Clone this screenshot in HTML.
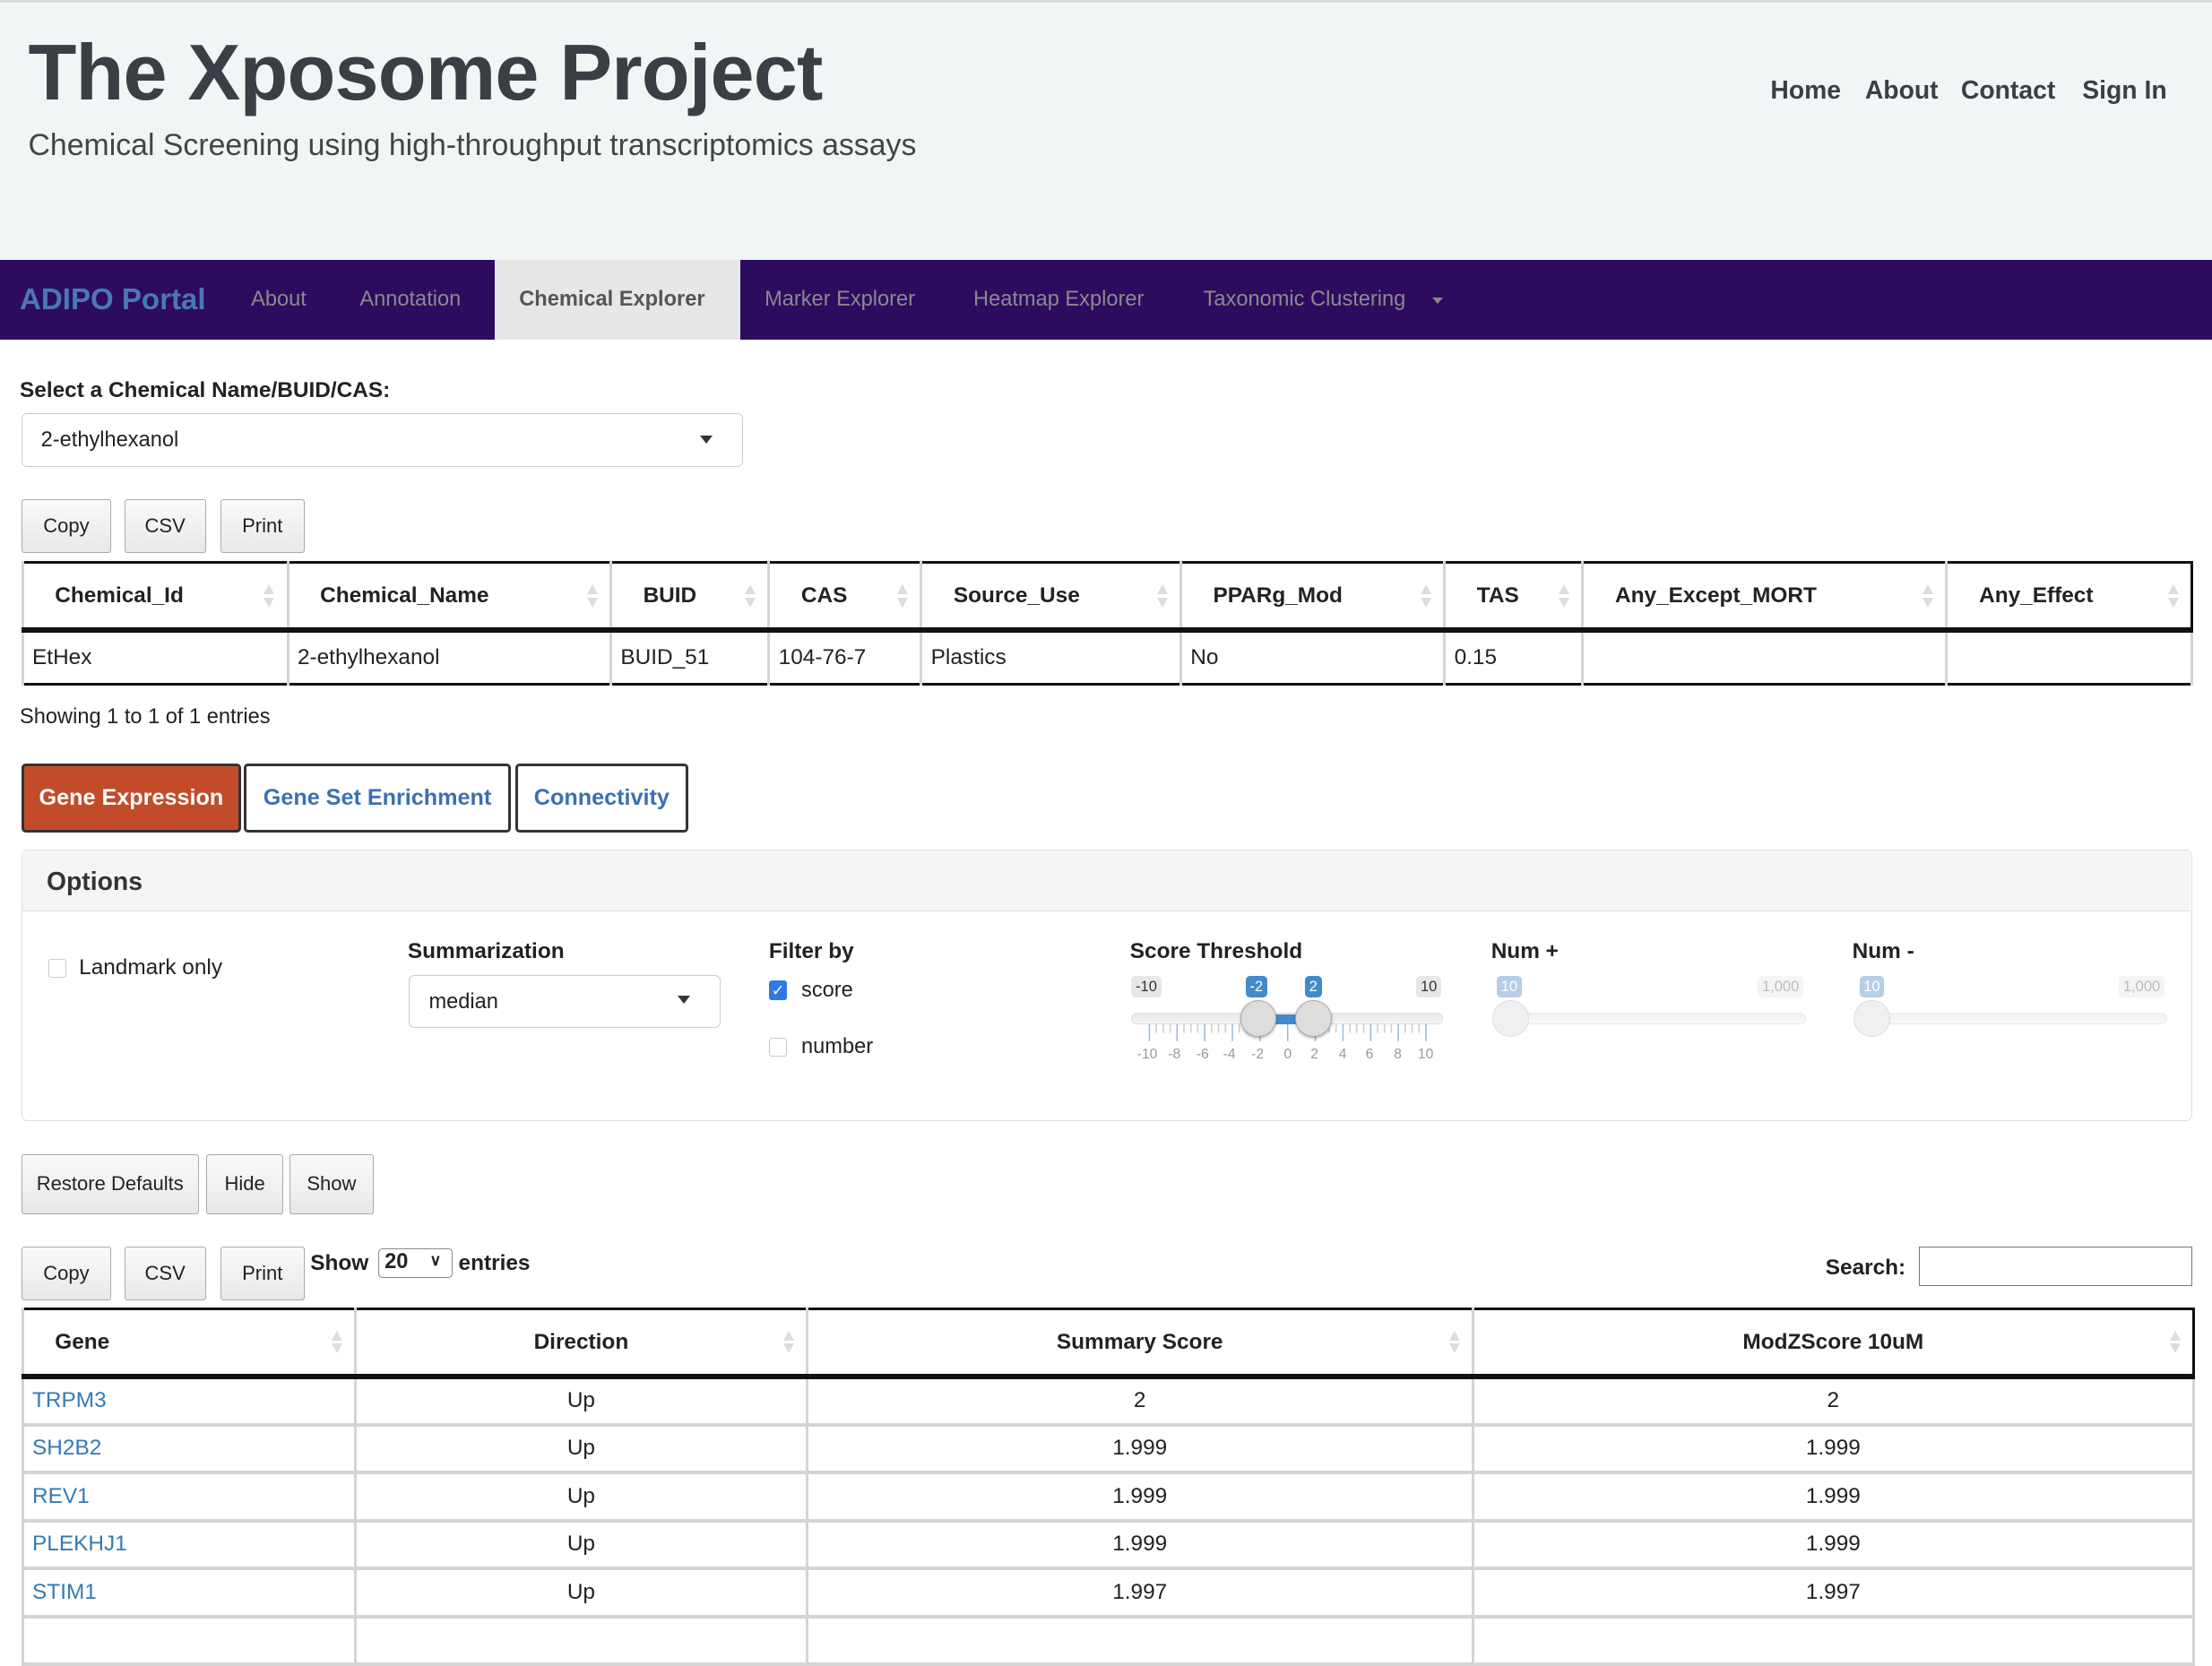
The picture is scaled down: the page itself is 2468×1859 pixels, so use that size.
<!DOCTYPE html>
<html><head><meta charset="utf-8">
<style>
html{zoom:1.574}
*{box-sizing:border-box}
body{margin:0;width:1568px;height:1153px;overflow:hidden;font-family:"Liberation Sans",Arial,sans-serif;font-size:15px;color:#222;background:#fff;position:relative}
.a{position:absolute}
.hdr{left:0;top:0;width:1568px;height:184px;background:#f2f5f6;border-top:2px solid #dcdcdc}
.title{left:20px;top:19px;font-size:56px;font-weight:bold;color:#3b3e44;letter-spacing:-0.5px}
.sub{left:20px;top:91px;font-size:21.5px;color:#444}
.tn{top:54px;font-size:18px;font-weight:bold;color:#3b3e44}
.nav{left:0;top:184px;width:1568px;height:57px;background:#2d0c5f}
.nl{top:204px;color:#8a8a8a;font-size:15px}
.btn{border:1px solid #aaa;border-radius:2px;background:linear-gradient(#fafafa,#e8e8e8);height:38px;display:flex;align-items:center;justify-content:center;font-size:14px;color:#222}
.sel{border:1px solid #ccc;border-radius:4px;background:#fff}
.caret{width:0;height:0;border-left:5px solid transparent;border-right:5px solid transparent;border-top:6px solid #333}
table{border-collapse:collapse;table-layout:fixed;position:absolute}
th{font-weight:bold;text-align:left;border-left:2px solid #d4d4d4;position:relative;padding:0 0 0 22px;font-size:15.5px;color:#222}
td{border-left:2px solid #d4d4d4;border-right:2px solid #d4d4d4;padding:0 6px;font-size:15.5px}
.si{position:absolute;right:8px;top:50%;margin-top:-8px;width:8px;height:16px}
.si:before{content:"";position:absolute;left:0;top:0;border-left:4px solid transparent;border-right:4px solid transparent;border-bottom:7px solid #ddd}
.si:after{content:"";position:absolute;left:0;top:9px;border-left:4px solid transparent;border-right:4px solid transparent;border-top:7px solid #ddd}
.lab{font-weight:bold;font-size:15.5px}
.cb{width:13px;height:13px;border:1px solid #ccc;border-radius:2px;background:#fff}
.tag{font-size:10.5px;border-radius:3px;padding:1px 3px;line-height:13px}
.track{height:8px;border-radius:4px;background:linear-gradient(#e8e8e8,#f6f6f6);border:1px solid #ddd}
.knob{width:26px;height:26px;border-radius:50%;background:#ddd;border:1px solid #aaa;box-shadow:0 1px 2px rgba(0,0,0,.3)}
.knob2{width:26px;height:26px;border-radius:50%;background:#f0f0f0;border:1px solid #ddd}
.t2 td{height:34px;border-bottom:3px solid #d4d4d4}
.lnk{color:#337ab7}
</style></head><body>
<div class="a hdr"></div>
<div class="a title">The Xposome Project</div>
<div class="a sub">Chemical Screening using high-throughput transcriptomics assays</div>
<div class="a tn" style="left:1255px">Home</div>
<div class="a tn" style="left:1322px">About</div>
<div class="a tn" style="left:1390px">Contact</div>
<div class="a tn" style="left:1476px">Sign In</div>

<div class="a nav"></div>
<div class="a" style="left:14px;top:201px;font-size:21px;font-weight:bold;color:#4a78b6">ADIPO Portal</div>
<div class="a nl" style="left:178px">About</div>
<div class="a nl" style="left:255px">Annotation</div>
<div class="a" style="left:351px;top:184px;width:174px;height:57px;background:#e7e7e7"></div>
<div class="a nl" style="left:368px;color:#555;font-weight:bold">Chemical Explorer</div>
<div class="a nl" style="left:542px">Marker Explorer</div>
<div class="a nl" style="left:690px">Heatmap Explorer</div>
<div class="a nl" style="left:853px">Taxonomic Clustering</div>
<div class="a caret" style="left:1015px;top:211px;border-top-color:#888;border-left-width:4px;border-right-width:4px;border-top-width:5px"></div>

<div class="a lab" style="left:14px;top:268px">Select a Chemical Name/BUID/CAS:</div>
<div class="a sel" style="left:15px;top:293px;width:512px;height:38px"></div>
<div class="a" style="left:29px;top:304px">2-ethylhexanol</div>
<div class="a caret" style="left:496px;top:309px"></div>

<div class="a btn" style="left:15px;top:354px;width:64px">Copy</div>
<div class="a btn" style="left:88px;top:354px;width:58px">CSV</div>
<div class="a btn" style="left:156px;top:354px;width:60px">Print</div>

<table style="left:15px;top:398px;width:1539px;border:2px solid #111">
<colgroup><col style="width:188px"><col style="width:229px"><col style="width:112px"><col style="width:108px"><col style="width:184px"><col style="width:187px"><col style="width:98px"><col style="width:258px"><col style="width:174px"></colgroup>
<tr style="height:48px;border-bottom:4px solid #111"><th>Chemical_Id<span class="si"></span></th><th>Chemical_Name<span class="si"></span></th><th>BUID<span class="si"></span></th><th>CAS<span class="si"></span></th><th>Source_Use<span class="si"></span></th><th>PPARg_Mod<span class="si"></span></th><th>TAS<span class="si"></span></th><th>Any_Except_MORT<span class="si"></span></th><th>Any_Effect<span class="si"></span></th></tr>
<tr style="height:38px"><td>EtHex</td><td>2-ethylhexanol</td><td>BUID_51</td><td>104-76-7</td><td>Plastics</td><td>No</td><td>0.15</td><td></td><td></td></tr>
</table>

<div class="a" style="left:14px;top:500px">Showing 1 to 1 of 1 entries</div>

<div class="a" style="left:15px;top:541px;width:156px;height:49px;background:#c24c29;border:2px solid #333;border-radius:3px;color:#fff;font-weight:bold;font-size:16px;display:flex;align-items:center;justify-content:center">Gene Expression</div>
<div class="a" style="left:173px;top:541px;width:189px;height:49px;border:2px solid #333;border-radius:3px;color:#3a70b0;font-weight:bold;font-size:16px;display:flex;align-items:center;justify-content:center">Gene Set Enrichment</div>
<div class="a" style="left:365px;top:541px;width:123px;height:49px;border:2px solid #333;border-radius:3px;color:#3a70b0;font-weight:bold;font-size:16px;display:flex;align-items:center;justify-content:center">Connectivity</div>

<div class="a" style="left:15px;top:602px;width:1539px;height:193px;border:1px solid #ddd;border-radius:4px"></div>
<div class="a" style="left:16px;top:603px;width:1537px;height:43px;background:#f5f5f5;border-bottom:1px solid #ddd"></div>
<div class="a" style="left:33px;top:615px;font-size:18px;font-weight:bold;color:#333">Options</div>

<div class="a cb" style="left:34px;top:680px"></div>
<div class="a" style="left:56px;top:677px;font-size:15.5px">Landmark only</div>

<div class="a lab" style="left:289px;top:666px">Summarization</div>
<div class="a sel" style="left:290px;top:691px;width:221px;height:38px"></div>
<div class="a" style="left:304px;top:702px">median</div>
<div class="a caret" style="left:480px;top:706px"></div>

<div class="a lab" style="left:545px;top:666px">Filter by</div>
<div class="a" style="left:545px;top:695px;width:13px;height:14px;background:#2d79e6;border-radius:2px;color:#fff;font-size:11px;line-height:14px;text-align:center">✓</div>
<div class="a" style="left:568px;top:694px">score</div>
<div class="a cb" style="left:545px;top:736px"></div>
<div class="a" style="left:568px;top:734px">number</div>

<div class="a lab" style="left:801px;top:666px">Score Threshold</div>
<div class="a tag" style="left:802px;top:692px;background:#e7e7e7;color:#333">-10</div>
<div class="a tag" style="left:883px;top:692px;background:#428bca;color:#fff">-2</div>
<div class="a tag" style="left:925px;top:692px;background:#428bca;color:#fff">2</div>
<div class="a tag" style="left:1004px;top:692px;background:#e7e7e7;color:#333">10</div>
<div class="a track" style="left:802px;top:718px;width:221px"></div>
<div class="a" style="left:892px;top:719px;width:39px;height:7px;background:#428bca"></div>
<svg class="a" style="left:802px;top:726px" width="222" height="14">
<g stroke="#9fbad6" stroke-width="1">
<line x1="13" y1="0" x2="13" y2="12"/><line x1="32.6" y1="0" x2="32.6" y2="12"/><line x1="52.2" y1="0" x2="52.2" y2="12"/><line x1="71.8" y1="0" x2="71.8" y2="12"/><line x1="91.4" y1="0" x2="91.4" y2="12"/><line x1="111" y1="0" x2="111" y2="12"/><line x1="130.6" y1="0" x2="130.6" y2="12"/><line x1="150.2" y1="0" x2="150.2" y2="12"/><line x1="169.8" y1="0" x2="169.8" y2="12"/><line x1="189.4" y1="0" x2="189.4" y2="12"/><line x1="209" y1="0" x2="209" y2="12"/>
</g>
<g stroke="#ccc" stroke-width="1">
<line x1="17.9" y1="0" x2="17.9" y2="6"/><line x1="22.8" y1="0" x2="22.8" y2="6"/><line x1="27.7" y1="0" x2="27.7" y2="6"/><line x1="37.5" y1="0" x2="37.5" y2="6"/><line x1="42.4" y1="0" x2="42.4" y2="6"/><line x1="47.3" y1="0" x2="47.3" y2="6"/><line x1="57.1" y1="0" x2="57.1" y2="6"/><line x1="62" y1="0" x2="62" y2="6"/><line x1="66.9" y1="0" x2="66.9" y2="6"/><line x1="76.7" y1="0" x2="76.7" y2="6"/><line x1="81.6" y1="0" x2="81.6" y2="6"/><line x1="86.5" y1="0" x2="86.5" y2="6"/><line x1="135.5" y1="0" x2="135.5" y2="6"/><line x1="140.4" y1="0" x2="140.4" y2="6"/><line x1="145.3" y1="0" x2="145.3" y2="6"/><line x1="155.1" y1="0" x2="155.1" y2="6"/><line x1="160" y1="0" x2="160" y2="6"/><line x1="164.9" y1="0" x2="164.9" y2="6"/><line x1="174.7" y1="0" x2="174.7" y2="6"/><line x1="179.6" y1="0" x2="179.6" y2="6"/><line x1="184.5" y1="0" x2="184.5" y2="6"/><line x1="194.3" y1="0" x2="194.3" y2="6"/><line x1="199.2" y1="0" x2="199.2" y2="6"/><line x1="204.1" y1="0" x2="204.1" y2="6"/>
</g></svg>
<div class="a" style="left:802px;top:742px;width:222px;font-size:10px;color:#999">
<span class="a" style="left:4px">-10</span><span class="a" style="left:26px">-8</span><span class="a" style="left:46px">-6</span><span class="a" style="left:65px">-4</span><span class="a" style="left:85px">-2</span><span class="a" style="left:108px">0</span><span class="a" style="left:127px">2</span><span class="a" style="left:147px">4</span><span class="a" style="left:166px">6</span><span class="a" style="left:186px">8</span><span class="a" style="left:203px">10</span></div>
<div class="a knob" style="left:879px;top:709px"></div>
<div class="a knob" style="left:918px;top:709px"></div>

<div class="a lab" style="left:1057px;top:666px">Num +</div>
<div class="a tag" style="left:1061px;top:692px;background:#b8cde8;color:#fff">10</div>
<div class="a tag" style="left:1246px;top:692px;background:#f4f4f4;color:#bbb">1,000</div>
<div class="a track" style="left:1059px;top:718px;width:221px;opacity:.6"></div>
<div class="a knob2" style="left:1058px;top:709px"></div>

<div class="a lab" style="left:1313px;top:666px">Num -</div>
<div class="a tag" style="left:1318px;top:692px;background:#b8cde8;color:#fff">10</div>
<div class="a tag" style="left:1502px;top:692px;background:#f4f4f4;color:#bbb">1,000</div>
<div class="a track" style="left:1315px;top:718px;width:221px;opacity:.6"></div>
<div class="a knob2" style="left:1314px;top:709px"></div>

<div class="a btn" style="left:15px;top:818px;width:126px;height:43px">Restore Defaults</div>
<div class="a btn" style="left:146px;top:818px;width:55px;height:43px">Hide</div>
<div class="a btn" style="left:205px;top:818px;width:60px;height:43px">Show</div>

<div class="a btn" style="left:15px;top:884px;width:64px">Copy</div>
<div class="a btn" style="left:88px;top:884px;width:58px">CSV</div>
<div class="a btn" style="left:156px;top:884px;width:60px">Print</div>
<div class="a lab" style="left:220px;top:887px">Show</div>
<div class="a" style="left:268px;top:885px;width:53px;height:21px;border:1px solid #888;border-radius:3px;font-weight:bold;font-size:15px;padding-left:4px;line-height:19px">20<span style="position:absolute;left:36px;top:-1px;font-size:11px">&#x2228;</span></div>
<div class="a lab" style="left:325px;top:887px">entries</div>
<div class="a lab" style="left:1294px;top:890px">Search:</div>
<div class="a" style="left:1360px;top:884px;width:194px;height:28px;border:1px solid #777"></div>

<table class="t2" style="left:15px;top:927px;width:1539px;border:2px solid #111">
<colgroup><col style="width:236px"><col style="width:320px"><col style="width:472px"><col style="width:511px"></colgroup>
<tr style="height:48px;border-bottom:4px solid #111"><th>Gene<span class="si"></span></th><th style="text-align:center;padding:0">Direction<span class="si"></span></th><th style="text-align:center;padding:0">Summary Score<span class="si"></span></th><th style="text-align:center;padding:0">ModZScore 10uM<span class="si"></span></th></tr>
<tr><td class="lnk">TRPM3</td><td align="center">Up</td><td align="center">2</td><td align="center">2</td></tr>
<tr><td class="lnk">SH2B2</td><td align="center">Up</td><td align="center">1.999</td><td align="center">1.999</td></tr>
<tr><td class="lnk">REV1</td><td align="center">Up</td><td align="center">1.999</td><td align="center">1.999</td></tr>
<tr><td class="lnk">PLEKHJ1</td><td align="center">Up</td><td align="center">1.999</td><td align="center">1.999</td></tr>
<tr><td class="lnk">STIM1</td><td align="center">Up</td><td align="center">1.997</td><td align="center">1.997</td></tr>
<tr><td class="lnk">&nbsp;</td><td></td><td></td><td></td></tr>
</table>
</body></html>
